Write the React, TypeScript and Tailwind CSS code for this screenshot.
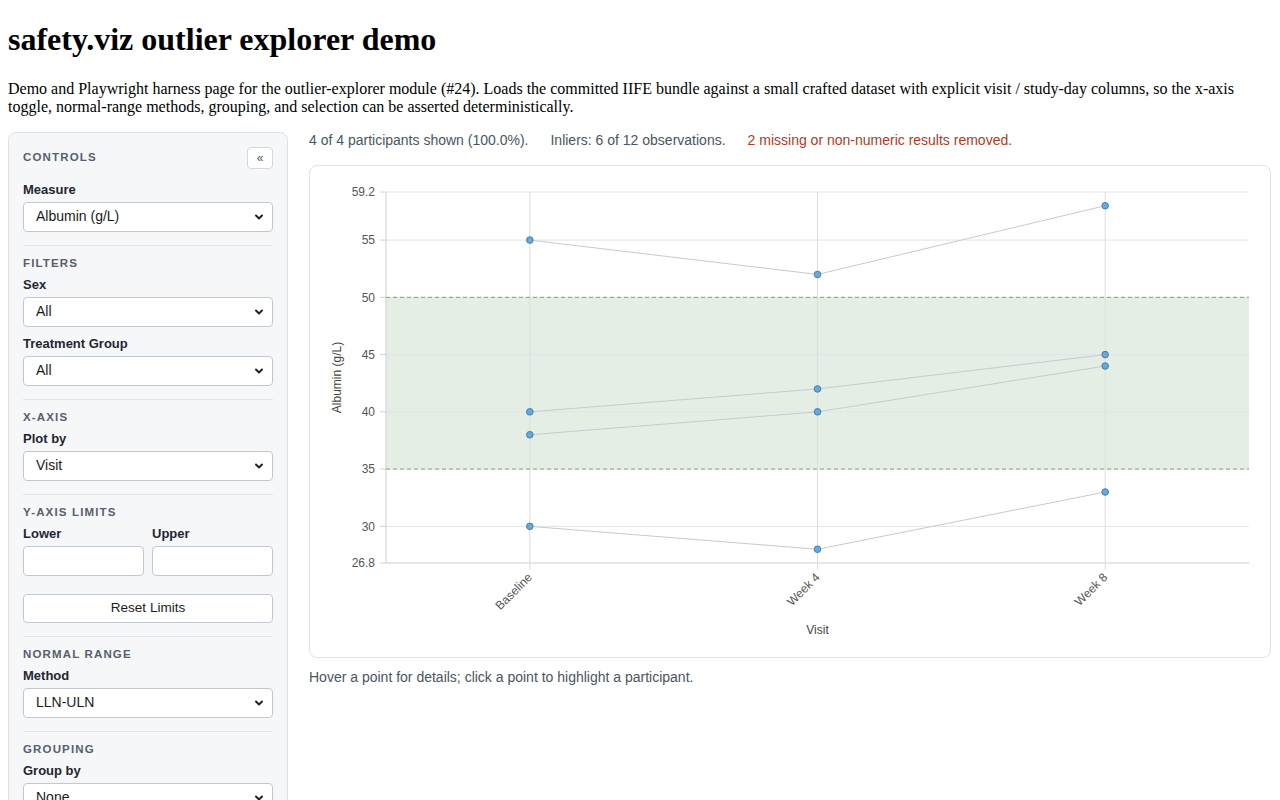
import React from 'react';

const SANS = { fontFamily: '"Liberation Sans", Arial, sans-serif' };

const TOP = 192;
const BOTTOM = 563;
const LEFT = 386;
const RIGHT = 1249;
const Y_MIN = 26.8;
const Y_MAX = 59.2;

const yPos = (v: number) => TOP + ((Y_MAX - v) * (BOTTOM - TOP)) / (Y_MAX - Y_MIN);
const step = (RIGHT - LEFT) / 3;
const visits = ['Baseline', 'Week 4', 'Week 8'];
const xPos = (i: number) => LEFT + step * (i + 0.5);

const participants = [
  [55, 52, 58],
  [40, 42, 45],
  [38, 40, 44],
  [30, 28, 33],
];

const yTicks = [59.2, 55, 50, 45, 40, 35, 30, 26.8];

function Chevron() {
  return (
    <svg className="pointer-events-none absolute right-[9px] top-1/2 -translate-y-1/2" width="10" height="10" viewBox="0 0 10 10" fill="none" stroke="#222" strokeWidth="2" strokeLinecap="round" strokeLinejoin="round">
      <path d="M2 3.5l3 3 3-3" />
    </svg>
  );
}

function Select({ value }: { value: string }) {
  return (
    <div className="relative">
      <select
        defaultValue={value}
        className="block h-[30px] w-full appearance-none rounded-[4px] border border-[#c3c8d0] bg-white pl-[12px] pr-6 text-[14px] text-[#1a1a1a] outline-none"
        style={SANS}
      >
        <option>{value}</option>
      </select>
      <Chevron />
    </div>
  );
}

function SectionTitle({ children }: { children: React.ReactNode }) {
  return <div className="mb-[7px] text-[11.5px] font-bold uppercase leading-[14px] tracking-[0.1em] text-[#55606e]">{children}</div>;
}

function Label({ children }: { children: React.ReactNode }) {
  return <div className="mb-[4px] text-[13px] font-bold leading-[16px] text-[#1f2630]">{children}</div>;
}

function Section({ title, children }: { title: string; children: React.ReactNode }) {
  return (
    <div className="mt-[13px] border-t border-[#e1e4e9] pt-[10px]">
      <SectionTitle>{title}</SectionTitle>
      {children}
    </div>
  );
}

function Sidebar() {
  return (
    <aside className="w-[280px] shrink-0 rounded-[8px] border border-[#dde1e7] bg-[#f6f7f9] px-[14px] pt-[14px] pb-[16px]" style={SANS}>
      <div className="mb-[13px] flex h-[22px] items-center justify-between">
        <span className="text-[11.5px] font-bold uppercase tracking-[0.1em] text-[#55606e]">Controls</span>
        <button className="flex h-[22px] w-[26px] items-center justify-center rounded-[4px] border border-[#d5d9df] bg-white text-[12px] text-[#4a5568]">«</button>
      </div>
      <Label>Measure</Label>
      <Select value="Albumin (g/L)" />

      <Section title="Filters">
        <Label>Sex</Label>
        <Select value="All" />
        <div className="mt-[9px]">
          <Label>Treatment Group</Label>
          <Select value="All" />
        </div>
      </Section>

      <Section title="X-Axis">
        <Label>Plot by</Label>
        <Select value="Visit" />
      </Section>

      <Section title="Y-Axis Limits">
        <div className="grid grid-cols-2 gap-[8px]">
          <div>
            <Label>Lower</Label>
            <input className="block h-[30px] w-full rounded-[4px] border border-[#c3c8d0] bg-white" />
          </div>
          <div>
            <Label>Upper</Label>
            <input className="block h-[30px] w-full rounded-[4px] border border-[#c3c8d0] bg-white" />
          </div>
        </div>
        <button className="mt-[18px] block h-[29px] w-full rounded-[4px] border border-[#c3c8d0] bg-white text-[13.5px] text-[#1a1a1a]">Reset Limits</button>
      </Section>

      <Section title="Normal Range">
        <Label>Method</Label>
        <Select value="LLN-ULN" />
      </Section>

      <Section title="Grouping">
        <Label>Group by</Label>
        <Select value="None" />
      </Section>
    </aside>
  );
}

function Chart() {
  return (
    <svg width="960" height="491" viewBox="310 166 960 491" className="block" style={SANS}>
      <rect x={LEFT} y={yPos(50)} width={RIGHT - LEFT} height={yPos(35) - yPos(50)} fill="#e4eee5" />
      {yTicks.map((t) => (
        <g key={t}>
          <line x1={LEFT} x2={RIGHT} y1={yPos(t)} y2={yPos(t)} stroke={t === Y_MIN ? '#cdd0d5' : '#e2e4e8'} strokeWidth="1" />
          <line x1={LEFT - 6} x2={LEFT} y1={yPos(t)} y2={yPos(t)} stroke="#cdd0d5" />
          <text x={LEFT - 11} y={yPos(t)} dy="0.35em" textAnchor="end" fontSize="12" fill="#555">
            {t}
          </text>
        </g>
      ))}
      <line x1={LEFT} x2={LEFT} y1={TOP} y2={BOTTOM} stroke="#cdd0d5" />
      {visits.map((v, i) => (
        <g key={v}>
          <line x1={xPos(i)} x2={xPos(i)} y1={TOP} y2={BOTTOM + 7} stroke="#dcdee2" />
          <text transform={`translate(${xPos(i) + 3},${BOTTOM + 15}) rotate(-45)`} textAnchor="end" fontSize="12" fill="#555">
            {v}
          </text>
        </g>
      ))}
      <line x1={LEFT} x2={RIGHT} y1={yPos(50)} y2={yPos(50)} stroke="#7ea77f" strokeDasharray="4 3" />
      <line x1={LEFT} x2={RIGHT} y1={yPos(35)} y2={yPos(35)} stroke="#7ea77f" strokeDasharray="4 3" />
      {participants.map((p, k) => (
        <polyline key={k} points={p.map((v, i) => `${xPos(i)},${yPos(v)}`).join(' ')} fill="none" stroke="#c6cacf" strokeWidth="1" />
      ))}
      {participants.map((p, k) =>
        p.map((v, i) => <circle key={`${k}-${i}`} cx={xPos(i)} cy={yPos(v)} r="3.3" fill="#6aa8d6" stroke="#3f80b5" strokeWidth="1" />)
      )}
      <text transform={`translate(341,${(TOP + BOTTOM) / 2}) rotate(-90)`} textAnchor="middle" fontSize="12" fill="#444">
        Albumin (g/L)
      </text>
      <text x={xPos(1)} y="634" textAnchor="middle" fontSize="12" fill="#444">
        Visit
      </text>
    </svg>
  );
}

export default function App() {
  return (
    <div className="bg-white px-[8px] text-black">
      <h1 className="my-[21.44px] text-[32px] font-bold leading-[37px]" style={{ fontFamily: '"Liberation Serif", "Times New Roman", serif' }}>
        safety.viz outlier explorer demo
      </h1>
      <p className="mb-[16px] text-[16px] leading-[18px]" style={{ fontFamily: '"Liberation Serif", "Times New Roman", serif' }}>
        Demo and Playwright harness page for the outlier-explorer module (#24). Loads the committed IIFE bundle against a small crafted dataset with explicit visit / study-day columns, so the x-axis toggle, normal-range methods, grouping, and selection can be asserted deterministically.
      </p>
      <div className="flex items-start gap-[21px]">
        <Sidebar />
        <main className="min-w-0 flex-1" style={SANS}>
          <div className="mb-[17px] flex h-[16px] items-center gap-[22px] text-[14px] leading-[16px]">
            <span className="text-[#4a5563]">4 of 4 participants shown (100.0%).</span>
            <span className="text-[#4a5563]">Inliers: 6 of 12 observations.</span>
            <span className="text-[#b03a1c]">2 missing or non-numeric results removed.</span>
          </div>
          <div className="w-[962px] overflow-hidden rounded-[8px] border border-[#dfe2e7] bg-white">
            <Chart />
          </div>
          <p className="mt-[11px] text-[14px] leading-[16px] text-[#4a5563]">Hover a point for details; click a point to highlight a participant.</p>
        </main>
      </div>
    </div>
  );
}
